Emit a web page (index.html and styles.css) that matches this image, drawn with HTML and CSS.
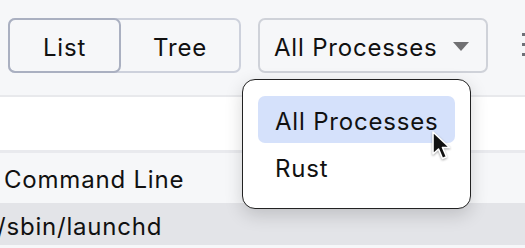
FILE: index.html
```html
<!DOCTYPE html>
<html>
<head>
<meta charset="utf-8">
<link rel="stylesheet" href="styles.css">
</head>
<body>
<div class="app">
  <div class="toolbar">
    <div class="segmented">
      <button class="seg seg-active">List</button>
      <button class="seg">Tree</button>
    </div>
    <div class="select">
      <span class="select-label">All Processes</span>
      <span class="caret"></span>
    </div>
    <div class="kebab"><i></i><i></i><i></i></div>
  </div>
  <div class="blank"></div>
  <div class="table-head"><span class="cell">Command Line</span></div>
  <div class="table-row selected"><span class="cell cell-cut">/sbin/launchd</span></div>
  <div class="menu">
    <div class="menu-item hover">All Processes</div>
    <div class="menu-item">Rust</div>
  </div>
  <svg class="cursor" width="26" height="32" viewBox="0 0 26 32">
    <path d="M2 1 L2 23 L7.5 18 L11.5 27.5 L15.5 25.8 L11.5 16.5 L18.5 16.5 Z" fill="#111" stroke="#fff" stroke-width="1.6" stroke-linejoin="round"/>
  </svg>
</div>
</body>
</html>
```
FILE: styles.css
```css
* { box-sizing: border-box; }
html, body { margin: 0; padding: 0; }
body {
  width: 525px;
  height: 248px;
  overflow: hidden;
  background: #f6f7f9;
  font-family: Inter, "Noto Sans", sans-serif;
  font-size: 24px;
  letter-spacing: 0.8px;
  color: #111;
}
.app {
  position: relative;
  width: 525px;
  height: 248px;
  overflow: hidden;
}
.toolbar {
  height: 97px;
  display: flex;
  align-items: flex-start;
  padding: 18px 0 0 8px;
  gap: 17px;
  border-bottom: 2px solid #e8e9ec;
  background: #f6f7f9;
  position: relative;
}
.segmented {
  display: flex;
  width: 233px;
  height: 55px;
  border: 2px solid #cdd1dc;
  border-radius: 7px;
  background: #f6f7f9;
}
.seg {
  font: inherit;
  letter-spacing: inherit;
  color: #111;
  background: transparent;
  border: none;
  padding: 3px 0 0 0;
  height: 100%;
  flex: 1;
  cursor: default;
}
.seg-active {
  flex: 0 0 113px;
  margin: -2px 0 -2px -2px;
  height: 55px;
  border: 2px solid #aab0c1;
  border-radius: 7px;
}
.select {
  width: 230px;
  height: 55px;
  border: 2px solid #cfd2d9;
  border-radius: 7px;
  display: flex;
  align-items: center;
  padding: 3px 17px 0 14px;
  justify-content: space-between;
}
.caret {
  width: 0;
  height: 0;
  border-left: 8.5px solid transparent;
  border-right: 8.5px solid transparent;
  border-top: 9px solid #707073;
  margin-top: -1px;
}
.kebab {
  position: absolute;
  left: 522px;
  top: 33px;
  display: flex;
  flex-direction: column;
  gap: 7px;
}
.kebab i {
  display: block;
  width: 3px;
  height: 3px;
  background: #6e7077;
}
.blank {
  height: 56px;
  background: #fff;
  border-bottom: 3px solid #e9eaee;
}
.table-head {
  height: 50px;
  background: #f6f7f9;
  display: flex;
  align-items: center;
  padding: 3px 0 0 4px;
}
.table-row {
  height: 42px;
  display: flex;
  align-items: center;
  padding-top: 5px;
  background: #e3e4e8;
}
.cell-cut { margin-left: -3px; }
.menu {
  position: absolute;
  left: 242px;
  top: 79px;
  width: 229px;
  height: 130px;
  background: #fff;
  border: 1px solid #222;
  border-radius: 13px;
  padding: 16px 15px 0 15px;
  box-shadow: 0 6px 18px rgba(0, 0, 0, 0.16);
}
.menu-item {
  height: 47px;
  display: flex;
  align-items: center;
  padding: 3px 0 0 17px;
  border-radius: 7px;
}
.menu-item.hover { background: #d5e1fb; }
.cursor {
  position: absolute;
  left: 431px;
  top: 131px;
  filter: drop-shadow(0 1px 1px rgba(0,0,0,0.35));
}
```
